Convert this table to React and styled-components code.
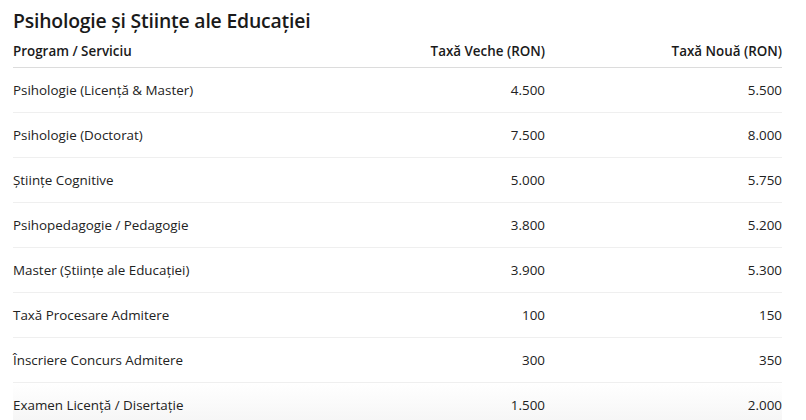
import React from "react";
import styled, { createGlobalStyle } from "styled-components";

const GlobalStyle = createGlobalStyle`
  html, body {
    margin: 0;
    padding: 0;
    background: #ffffff;
  }
  body {
    font-family: "Open Sans", "Noto Sans", "Liberation Sans", sans-serif;
    color: #1f1f1f;
  }
`;

const Section = styled.section`
  padding: 7px 24px 0 13px;
`;

const Title = styled.h2`
  margin: 0;
  height: 27px;
  font-size: 19.4px;
  font-weight: 600;
  line-height: 27px;
  color: #1a1a1a;
  letter-spacing: -0.2px;
`;

const Table = styled.table`
  width: 769px;
  border-collapse: collapse;
  font-size: 13.4px;
`;

const HeadCell = styled.th`
  height: 33px;
  padding: 0;
  font-weight: 600;
  text-align: ${(p) => (p.$right ? "right" : "left")};
  width: ${(p) => p.$w || "auto"};
  border-bottom: 1px solid #dcdcdc;
  vertical-align: middle;
  color: #1a1a1a;
`;

const Row = styled.tr`
  background: ${(p) =>
    p.$fade ? "linear-gradient(to bottom, #ffffff 0%, #f4f4f4 100%)" : "transparent"};
`;

const Cell = styled.td`
  height: 44px;
  padding: 0;
  text-align: ${(p) => (p.$right ? "right" : "left")};
  border-bottom: 1px solid #efefef;
  vertical-align: middle;
  color: #222;
`;

const rows = [
  ["Psihologie (Licență & Master)", "4.500", "5.500"],
  ["Psihologie (Doctorat)", "7.500", "8.000"],
  ["Științe Cognitive", "5.000", "5.750"],
  ["Psihopedagogie / Pedagogie", "3.800", "5.200"],
  ["Master (Științe ale Educației)", "3.900", "5.300"],
  ["Taxă Procesare Admitere", "100", "150"],
  ["Înscriere Concurs Admitere", "300", "350"],
  ["Examen Licență / Disertație", "1.500", "2.000"],
];

export default function App() {
  return (
    <>
      <GlobalStyle />
      <Section>
        <Title>Psihologie și Științe ale Educației</Title>
        <Table>
          <thead>
            <tr>
              <HeadCell>Program / Serviciu</HeadCell>
              <HeadCell $right $w="200px">Taxă Veche (RON)</HeadCell>
              <HeadCell $right $w="237px">Taxă Nouă (RON)</HeadCell>
            </tr>
          </thead>
          <tbody>
            {rows.map(([name, oldFee, newFee], i) => (
              <Row key={name} $fade={i === rows.length - 1}>
                <Cell>{name}</Cell>
                <Cell $right>{oldFee}</Cell>
                <Cell $right>{newFee}</Cell>
              </Row>
            ))}
          </tbody>
        </Table>
      </Section>
    </>
  );
}
